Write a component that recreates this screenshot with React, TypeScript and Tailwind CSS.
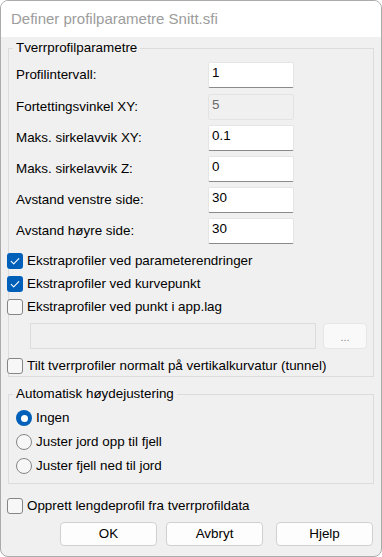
import React from "react";

const font = { fontFamily: '"Liberation Sans", Arial, sans-serif' };

function Check({ checked }: { checked: boolean }) {
  return checked ? (
    <span className="w-[16px] h-[16px] rounded-[3px] bg-[#005fb8] flex items-center justify-center shrink-0">
      <svg width="16" height="16" viewBox="0 0 16 16">
        <polyline points="4.2,8.4 6.7,10.9 11.8,5.6" fill="none" stroke="#ffffff" strokeWidth="1.1" strokeLinecap="round" strokeLinejoin="round" />
      </svg>
    </span>
  ) : (
    <span className="w-[16px] h-[16px] rounded-[3px] bg-[#f7f7f7] border border-[#858585] shrink-0" />
  );
}

function Radio({ checked }: { checked: boolean }) {
  return checked ? (
    <span className="w-[16px] h-[16px] rounded-full bg-[#005fb8] flex items-center justify-center shrink-0">
      <span className="w-[7px] h-[7px] rounded-full bg-white" />
    </span>
  ) : (
    <span className="w-[16px] h-[16px] rounded-full bg-[#f7f7f7] border border-[#858585] shrink-0" />
  );
}

function Field({ label, value, disabled }: { label: string; value: string; disabled?: boolean }) {
  return (
    <div className="grid grid-cols-[192px_86px] items-center h-[26px]">
      <span className="text-[13.4px] leading-[16px] text-black">{label}</span>
      {disabled ? (
        <div className="h-[26px] bg-[#f0f0f0] border border-[#e3e3e3] rounded-[2px] px-[3px] pt-[2px] text-[13.4px] leading-[16px] text-[#6d6d6d]">
          {value}
        </div>
      ) : (
        <div className="h-[26px] bg-white border border-[#e5e5e5] border-b-[#8a8a8a] rounded-[2px] px-[3px] pt-[2px] text-[13.4px] leading-[16px] text-black">
          {value}
        </div>
      )}
    </div>
  );
}

function CheckRow({ label, checked }: { label: string; checked: boolean }) {
  return (
    <div className="flex items-center h-[23px] gap-[4px]">
      <Check checked={checked} />
      <span className="text-[13.4px] leading-[16px] text-black whitespace-nowrap">{label}</span>
    </div>
  );
}

function RadioRow({ label, checked }: { label: string; checked: boolean }) {
  return (
    <div className="flex items-center h-[24px] gap-[4px]">
      <Radio checked={checked} />
      <span className="text-[13.4px] leading-[16px] text-black whitespace-nowrap">{label}</span>
    </div>
  );
}

export default function App() {
  return (
    <div className="w-[382px] h-[557px] bg-white" style={font}>
      <div className="w-full h-full flex flex-col border border-[#ababab] rounded-[8px] overflow-hidden bg-[#f0f0f0]">
        <div className="h-[36px] shrink-0 bg-white flex items-center pl-[10px] text-[15px] text-[#9c9c9c]">
          Definer profilparametre Snitt.sfi
        </div>
        <div className="flex flex-col px-[7px]">
          <fieldset className="mt-[3px] border border-[#dcdcdc] h-[337px] flex flex-col pl-[7px]">
            <legend className="ml-[-3px] px-[3px] text-[13.4px] leading-[16px] text-black">Tverrprofilparametre</legend>
            <div className="flex flex-col gap-[5px] mt-[6px]">
              <Field label="Profilintervall:" value="1" />
              <div className="mt-[1px]">
                <Field label="Fortettingsvinkel XY:" value="5" disabled />
              </div>
              <Field label="Maks. sirkelavvik XY:" value="0.1" />
              <Field label="Maks. sirkelavvik Z:" value="0" />
              <Field label="Avstand venstre side:" value="30" />
              <Field label="Avstand høyre side:" value="30" />
            </div>
            <div className="flex flex-col ml-[-9px] mt-[5px]">
              <CheckRow label="Ekstraprofiler ved parameterendringer" checked />
              <CheckRow label="Ekstraprofiler ved kurvepunkt" checked />
              <CheckRow label="Ekstraprofiler ved punkt i app.lag" checked={false} />
            </div>
            <div className="flex items-center gap-[7px] mt-[5px] ml-[14px] h-[26px]">
              <div className="w-[286px] h-[26px] border border-[#dcdcdc] bg-[#f0f0f0]" />
              <div className="w-[44px] h-[26px] rounded-[4px] border border-[#e6e6e6] bg-[#f9f9f9] flex items-center justify-center text-[11px] pt-[3px] text-[#8a8a8a]">
                ...
              </div>
            </div>
            <div className="ml-[-9px] mt-[5px]">
              <CheckRow label="Tilt tverrprofiler normalt på vertikalkurvatur (tunnel)" checked={false} />
            </div>
          </fieldset>
          <fieldset className="mt-[9px] border border-[#dcdcdc] h-[98px] flex flex-col pl-[7px]">
            <legend className="ml-[-3px] px-[3px] text-[13.4px] leading-[16px] text-black">Automatisk høydejustering</legend>
            <div className="flex flex-col mt-[4px]">
              <RadioRow label="Ingen" checked />
              <RadioRow label="Juster jord opp til fjell" checked={false} />
              <RadioRow label="Juster fjell ned til jord" checked={false} />
            </div>
          </fieldset>
          <div className="ml-[-1px] mt-[10px]">
            <CheckRow label="Opprett lengdeprofil fra tverrprofildata" checked={false} />
          </div>
          <div className="flex mt-[5px] ml-[52px]">
            <button className="w-[97px] h-[24px] rounded-[4px] border border-[#d0d0d0] bg-[#fdfdfd] text-[13.4px] text-black">OK</button>
            <button className="ml-[9px] w-[97px] h-[24px] rounded-[4px] border border-[#d0d0d0] bg-[#fdfdfd] text-[13.4px] text-black">Avbryt</button>
            <button className="ml-[13px] w-[97px] h-[24px] rounded-[4px] border border-[#d0d0d0] bg-[#fdfdfd] text-[13.4px] text-black">Hjelp</button>
          </div>
        </div>
      </div>
    </div>
  );
}
